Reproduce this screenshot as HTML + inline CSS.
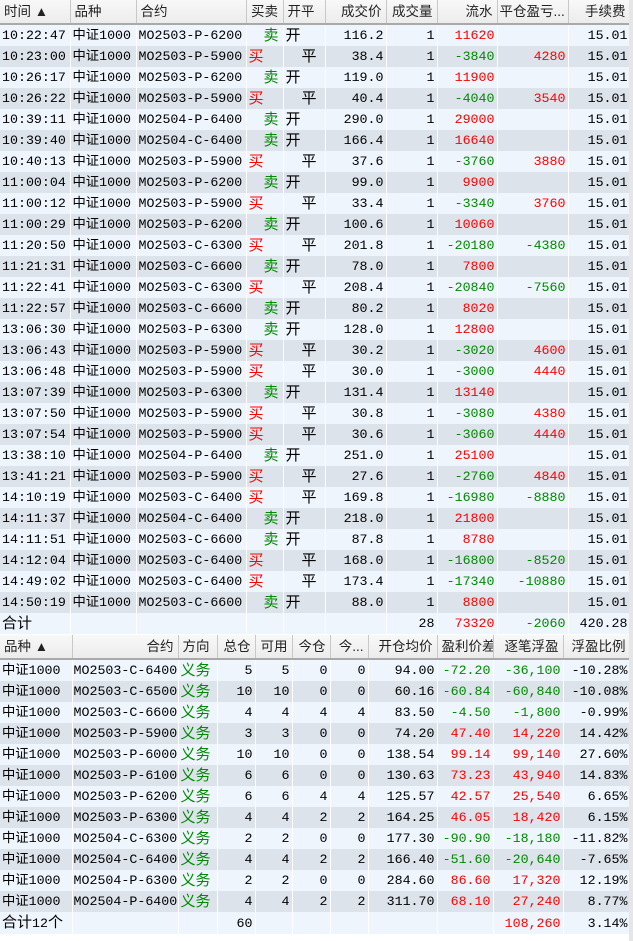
<!DOCTYPE html>
<html><head><meta charset="utf-8"><style>
body{margin:0;width:633px;height:941px;background:#fff;overflow:hidden;font-family:"Liberation Mono","Noto Sans CJK SC",monospace;font-size:13.3px;color:#000}
table{border-collapse:collapse;table-layout:fixed;position:absolute;left:0}
td,th{padding:0 2px;white-space:nowrap;overflow:hidden;height:21px;line-height:21px;border-right:1px solid #fff;border-bottom:0;vertical-align:middle}
th{font-family:"Liberation Sans","Noto Sans CJK SC",sans-serif;font-weight:normal;font-size:13.5px;color:#222;background:linear-gradient(#f8f8f8,#ececec);border-right:1px solid #c8c8c8;border-bottom:2px solid #a9a9a9;height:23px;line-height:23px;padding:0 4px}
tr.a td{background:#eef5fd}
tr.b td{background:#dde3eb}
.r{text-align:right}.c{text-align:center}
.red{color:#f00}.g{color:#080}
.cj{font-family:"Noto Sans CJK SC",sans-serif;font-size:15px;line-height:19px;padding-bottom:2px;height:19px}
span.cj{padding:0;line-height:19px}
.s{padding-left:17px}.p{padding-left:18px}
#t1{top:0;width:630px}#t2{top:635px;width:630px}
.bar{position:absolute;left:629px;top:0;width:4px;height:941px;background:#e6e6e6}
</style></head><body>
<table id="t1">
<colgroup><col style="width:70px"><col style="width:66px"><col style="width:110px"><col style="width:37px"><col style="width:42px"><col style="width:61px"><col style="width:51px"><col style="width:60px"><col style="width:71px"><col style="width:62px"></colgroup>
<tr><th style="text-align:left">时间 ▲</th><th style="text-align:left">品种</th><th style="text-align:left">合约</th><th>买卖</th><th style="text-align:left">开平</th><th class="r">成交价</th><th class="r">成交量</th><th class="r">流水</th><th style="text-align:left;padding:0 2px">平仓盈亏...</th><th class="r">手续费</th></tr>
<tr class="a"><td>10:22:47</td><td>中证1000</td><td>MO2503-P-6200</td><td class="g s cj">卖</td><td class="cj">开</td><td class="r">116.2</td><td class="r">1</td><td class="r red">11620</td><td></td><td class="r">15.01</td></tr>
<tr class="b"><td>10:23:00</td><td>中证1000</td><td>MO2503-P-5900</td><td class="red cj">买</td><td class="cj p">平</td><td class="r">38.4</td><td class="r">1</td><td class="r g">-3840</td><td class="r red">4280</td><td class="r">15.01</td></tr>
<tr class="a"><td>10:26:17</td><td>中证1000</td><td>MO2503-P-6200</td><td class="g s cj">卖</td><td class="cj">开</td><td class="r">119.0</td><td class="r">1</td><td class="r red">11900</td><td></td><td class="r">15.01</td></tr>
<tr class="b"><td>10:26:22</td><td>中证1000</td><td>MO2503-P-5900</td><td class="red cj">买</td><td class="cj p">平</td><td class="r">40.4</td><td class="r">1</td><td class="r g">-4040</td><td class="r red">3540</td><td class="r">15.01</td></tr>
<tr class="a"><td>10:39:11</td><td>中证1000</td><td>MO2504-P-6400</td><td class="g s cj">卖</td><td class="cj">开</td><td class="r">290.0</td><td class="r">1</td><td class="r red">29000</td><td></td><td class="r">15.01</td></tr>
<tr class="b"><td>10:39:40</td><td>中证1000</td><td>MO2504-C-6400</td><td class="g s cj">卖</td><td class="cj">开</td><td class="r">166.4</td><td class="r">1</td><td class="r red">16640</td><td></td><td class="r">15.01</td></tr>
<tr class="a"><td>10:40:13</td><td>中证1000</td><td>MO2503-P-5900</td><td class="red cj">买</td><td class="cj p">平</td><td class="r">37.6</td><td class="r">1</td><td class="r g">-3760</td><td class="r red">3880</td><td class="r">15.01</td></tr>
<tr class="b"><td>11:00:04</td><td>中证1000</td><td>MO2503-P-6200</td><td class="g s cj">卖</td><td class="cj">开</td><td class="r">99.0</td><td class="r">1</td><td class="r red">9900</td><td></td><td class="r">15.01</td></tr>
<tr class="a"><td>11:00:12</td><td>中证1000</td><td>MO2503-P-5900</td><td class="red cj">买</td><td class="cj p">平</td><td class="r">33.4</td><td class="r">1</td><td class="r g">-3340</td><td class="r red">3760</td><td class="r">15.01</td></tr>
<tr class="b"><td>11:00:29</td><td>中证1000</td><td>MO2503-P-6200</td><td class="g s cj">卖</td><td class="cj">开</td><td class="r">100.6</td><td class="r">1</td><td class="r red">10060</td><td></td><td class="r">15.01</td></tr>
<tr class="a"><td>11:20:50</td><td>中证1000</td><td>MO2503-C-6300</td><td class="red cj">买</td><td class="cj p">平</td><td class="r">201.8</td><td class="r">1</td><td class="r g">-20180</td><td class="r g">-4380</td><td class="r">15.01</td></tr>
<tr class="b"><td>11:21:31</td><td>中证1000</td><td>MO2503-C-6600</td><td class="g s cj">卖</td><td class="cj">开</td><td class="r">78.0</td><td class="r">1</td><td class="r red">7800</td><td></td><td class="r">15.01</td></tr>
<tr class="a"><td>11:22:41</td><td>中证1000</td><td>MO2503-C-6300</td><td class="red cj">买</td><td class="cj p">平</td><td class="r">208.4</td><td class="r">1</td><td class="r g">-20840</td><td class="r g">-7560</td><td class="r">15.01</td></tr>
<tr class="b"><td>11:22:57</td><td>中证1000</td><td>MO2503-C-6600</td><td class="g s cj">卖</td><td class="cj">开</td><td class="r">80.2</td><td class="r">1</td><td class="r red">8020</td><td></td><td class="r">15.01</td></tr>
<tr class="a"><td>13:06:30</td><td>中证1000</td><td>MO2503-P-6300</td><td class="g s cj">卖</td><td class="cj">开</td><td class="r">128.0</td><td class="r">1</td><td class="r red">12800</td><td></td><td class="r">15.01</td></tr>
<tr class="b"><td>13:06:43</td><td>中证1000</td><td>MO2503-P-5900</td><td class="red cj">买</td><td class="cj p">平</td><td class="r">30.2</td><td class="r">1</td><td class="r g">-3020</td><td class="r red">4600</td><td class="r">15.01</td></tr>
<tr class="a"><td>13:06:48</td><td>中证1000</td><td>MO2503-P-5900</td><td class="red cj">买</td><td class="cj p">平</td><td class="r">30.0</td><td class="r">1</td><td class="r g">-3000</td><td class="r red">4440</td><td class="r">15.01</td></tr>
<tr class="b"><td>13:07:39</td><td>中证1000</td><td>MO2503-P-6300</td><td class="g s cj">卖</td><td class="cj">开</td><td class="r">131.4</td><td class="r">1</td><td class="r red">13140</td><td></td><td class="r">15.01</td></tr>
<tr class="a"><td>13:07:50</td><td>中证1000</td><td>MO2503-P-5900</td><td class="red cj">买</td><td class="cj p">平</td><td class="r">30.8</td><td class="r">1</td><td class="r g">-3080</td><td class="r red">4380</td><td class="r">15.01</td></tr>
<tr class="b"><td>13:07:54</td><td>中证1000</td><td>MO2503-P-5900</td><td class="red cj">买</td><td class="cj p">平</td><td class="r">30.6</td><td class="r">1</td><td class="r g">-3060</td><td class="r red">4440</td><td class="r">15.01</td></tr>
<tr class="a"><td>13:38:10</td><td>中证1000</td><td>MO2504-P-6400</td><td class="g s cj">卖</td><td class="cj">开</td><td class="r">251.0</td><td class="r">1</td><td class="r red">25100</td><td></td><td class="r">15.01</td></tr>
<tr class="b"><td>13:41:21</td><td>中证1000</td><td>MO2503-P-5900</td><td class="red cj">买</td><td class="cj p">平</td><td class="r">27.6</td><td class="r">1</td><td class="r g">-2760</td><td class="r red">4840</td><td class="r">15.01</td></tr>
<tr class="a"><td>14:10:19</td><td>中证1000</td><td>MO2503-C-6400</td><td class="red cj">买</td><td class="cj p">平</td><td class="r">169.8</td><td class="r">1</td><td class="r g">-16980</td><td class="r g">-8880</td><td class="r">15.01</td></tr>
<tr class="b"><td>14:11:37</td><td>中证1000</td><td>MO2504-C-6400</td><td class="g s cj">卖</td><td class="cj">开</td><td class="r">218.0</td><td class="r">1</td><td class="r red">21800</td><td></td><td class="r">15.01</td></tr>
<tr class="a"><td>14:11:51</td><td>中证1000</td><td>MO2503-C-6600</td><td class="g s cj">卖</td><td class="cj">开</td><td class="r">87.8</td><td class="r">1</td><td class="r red">8780</td><td></td><td class="r">15.01</td></tr>
<tr class="b"><td>14:12:04</td><td>中证1000</td><td>MO2503-C-6400</td><td class="red cj">买</td><td class="cj p">平</td><td class="r">168.0</td><td class="r">1</td><td class="r g">-16800</td><td class="r g">-8520</td><td class="r">15.01</td></tr>
<tr class="a"><td>14:49:02</td><td>中证1000</td><td>MO2503-C-6400</td><td class="red cj">买</td><td class="cj p">平</td><td class="r">173.4</td><td class="r">1</td><td class="r g">-17340</td><td class="r g">-10880</td><td class="r">15.01</td></tr>
<tr class="b"><td>14:50:19</td><td>中证1000</td><td>MO2503-C-6600</td><td class="g s cj">卖</td><td class="cj">开</td><td class="r">88.0</td><td class="r">1</td><td class="r red">8800</td><td></td><td class="r">15.01</td></tr>
<tr class="a"><td class="cj">合计</td><td></td><td></td><td></td><td></td><td></td><td class="r">28</td><td class="r red">73320</td><td class="r g">-2060</td><td class="r">420.28</td></tr>
</table>
<table id="t2">
<colgroup><col style="width:72px"><col style="width:106px"><col style="width:39px"><col style="width:38px"><col style="width:37px"><col style="width:38px"><col style="width:38px"><col style="width:69px"><col style="width:56px"><col style="width:70px"><col style="width:67px"></colgroup>
<tr><th style="text-align:left">品种 ▲</th><th class="r">合约</th><th style="text-align:left">方向</th><th class="r">总仓</th><th class="r">可用</th><th class="r">今仓</th><th class="r">今...</th><th class="r">开仓均价</th><th class="r">盈利价差</th><th class="r">逐笔浮盈</th><th class="r">浮盈比例</th></tr>
<tr class="a"><td>中证1000</td><td style="padding:0 1px">MO2503-C-6400</td><td class="g cj">义务</td><td class="r">5</td><td class="r">5</td><td class="r">0</td><td class="r">0</td><td class="r">94.00</td><td class="r g">-72.20</td><td class="r g">-36,100</td><td class="r">-10.28%</td></tr>
<tr class="b"><td>中证1000</td><td style="padding:0 1px">MO2503-C-6500</td><td class="g cj">义务</td><td class="r">10</td><td class="r">10</td><td class="r">0</td><td class="r">0</td><td class="r">60.16</td><td class="r g">-60.84</td><td class="r g">-60,840</td><td class="r">-10.08%</td></tr>
<tr class="a"><td>中证1000</td><td style="padding:0 1px">MO2503-C-6600</td><td class="g cj">义务</td><td class="r">4</td><td class="r">4</td><td class="r">4</td><td class="r">4</td><td class="r">83.50</td><td class="r g">-4.50</td><td class="r g">-1,800</td><td class="r">-0.99%</td></tr>
<tr class="b"><td>中证1000</td><td style="padding:0 1px">MO2503-P-5900</td><td class="g cj">义务</td><td class="r">3</td><td class="r">3</td><td class="r">0</td><td class="r">0</td><td class="r">74.20</td><td class="r red">47.40</td><td class="r red">14,220</td><td class="r">14.42%</td></tr>
<tr class="a"><td>中证1000</td><td style="padding:0 1px">MO2503-P-6000</td><td class="g cj">义务</td><td class="r">10</td><td class="r">10</td><td class="r">0</td><td class="r">0</td><td class="r">138.54</td><td class="r red">99.14</td><td class="r red">99,140</td><td class="r">27.60%</td></tr>
<tr class="b"><td>中证1000</td><td style="padding:0 1px">MO2503-P-6100</td><td class="g cj">义务</td><td class="r">6</td><td class="r">6</td><td class="r">0</td><td class="r">0</td><td class="r">130.63</td><td class="r red">73.23</td><td class="r red">43,940</td><td class="r">14.83%</td></tr>
<tr class="a"><td>中证1000</td><td style="padding:0 1px">MO2503-P-6200</td><td class="g cj">义务</td><td class="r">6</td><td class="r">6</td><td class="r">4</td><td class="r">4</td><td class="r">125.57</td><td class="r red">42.57</td><td class="r red">25,540</td><td class="r">6.65%</td></tr>
<tr class="b"><td>中证1000</td><td style="padding:0 1px">MO2503-P-6300</td><td class="g cj">义务</td><td class="r">4</td><td class="r">4</td><td class="r">2</td><td class="r">2</td><td class="r">164.25</td><td class="r red">46.05</td><td class="r red">18,420</td><td class="r">6.15%</td></tr>
<tr class="a"><td>中证1000</td><td style="padding:0 1px">MO2504-C-6300</td><td class="g cj">义务</td><td class="r">2</td><td class="r">2</td><td class="r">0</td><td class="r">0</td><td class="r">177.30</td><td class="r g">-90.90</td><td class="r g">-18,180</td><td class="r">-11.82%</td></tr>
<tr class="b"><td>中证1000</td><td style="padding:0 1px">MO2504-C-6400</td><td class="g cj">义务</td><td class="r">4</td><td class="r">4</td><td class="r">2</td><td class="r">2</td><td class="r">166.40</td><td class="r g">-51.60</td><td class="r g">-20,640</td><td class="r">-7.65%</td></tr>
<tr class="a"><td>中证1000</td><td style="padding:0 1px">MO2504-P-6300</td><td class="g cj">义务</td><td class="r">2</td><td class="r">2</td><td class="r">0</td><td class="r">0</td><td class="r">284.60</td><td class="r red">86.60</td><td class="r red">17,320</td><td class="r">12.19%</td></tr>
<tr class="b"><td>中证1000</td><td style="padding:0 1px">MO2504-P-6400</td><td class="g cj">义务</td><td class="r">4</td><td class="r">4</td><td class="r">2</td><td class="r">2</td><td class="r">311.70</td><td class="r red">68.10</td><td class="r red">27,240</td><td class="r">8.77%</td></tr>
<tr class="a"><td><span class="cj">合计</span>12<span class="cj">个</span></td><td></td><td></td><td class="r">60</td><td></td><td></td><td></td><td></td><td></td><td class="r red">108,260</td><td class="r">3.14%</td></tr>
</table>
<div class="bar"></div>
</body></html>
